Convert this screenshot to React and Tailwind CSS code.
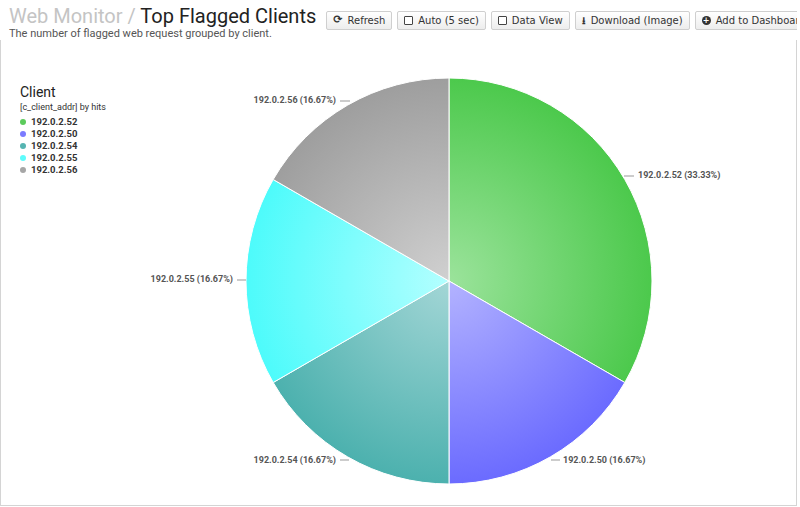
import React from "react";

const cx = 449, cy = 281, r = 203;
const pt = (deg) => {
  const a = (deg * Math.PI) / 180;
  return [cx + r * Math.sin(a), cy - r * Math.cos(a)];
};
const slices = [
  { from: 0, to: 120, c1: "#9be39b", c2: "#4cc94c", id: "g" },
  { from: 120, to: 180, c1: "#b3b3ff", c2: "#6b6bff", id: "b" },
  { from: 180, to: 240, c1: "#a3d6d6", c2: "#4cb1ae", id: "t" },
  { from: 240, to: 300, c1: "#b3ffff", c2: "#4dfbfb", id: "c" },
  { from: 300, to: 360, c1: "#d0d0d0", c2: "#9e9e9e", id: "s" },
];

function Btn({ children, icon }) {
  return (
    <div className="shrink-0 flex items-center gap-[5px] h-[19px] px-[6px] border border-[#cfcfcf] rounded-[2px] bg-gradient-to-b from-white to-[#ededed] text-[10px] text-[#333] whitespace-nowrap" style={{ fontFamily: "'DejaVu Sans', sans-serif" }}>
      {icon}
      {children}
    </div>
  );
}
const Box = () => <span className="inline-block w-[9px] h-[9px] border border-[#444] rounded-[1px] bg-white" />;

export default function App() {
  const legend = [
    ["#5ccb5c", "192.0.2.52"],
    ["#7b7bff", "192.0.2.50"],
    ["#56b4b1", "192.0.2.54"],
    ["#5efcfc", "192.0.2.55"],
    ["#a6a6a6", "192.0.2.56"],
  ];
  const labels = [
    [638, 178, "start", "192.0.2.52 (33.33%)", [624, 176, 634, 176]],
    [563, 463, "start", "192.0.2.50 (16.67%)", [551, 460, 560, 460]],
    [336, 463, "end", "192.0.2.54 (16.67%)", [349, 460, 340, 460]],
    [233, 282, "end", "192.0.2.55 (16.67%)", [246, 280, 237, 280]],
    [336, 103, "end", "192.0.2.56 (16.67%)", [350, 101, 340, 101]],
  ];
  return (
    <div className="relative w-[800px] h-[507px] bg-white overflow-hidden" style={{ fontFamily: "Roboto, sans-serif" }}>
      <div className="flex items-start pl-[9px] pt-[4px] w-[1000px]">
        <div className="shrink-0 whitespace-nowrap">
          <div className="text-[20px] leading-[24px] text-[#222]">
            <span className="text-[#c4c4c4]">Web Monitor / </span>Top Flagged Clients
          </div>
          <div className="text-[11px] leading-[12px] text-[#555]">The number of flagged web request grouped by client.</div>
        </div>
        <div className="flex gap-[5px] ml-[10px] mt-[7px] shrink-0">
          <Btn icon={<span className="text-[11px] font-bold">⟳</span>}>Refresh</Btn>
          <Btn icon={<Box />}>Auto (5 sec)</Btn>
          <Btn icon={<Box />}>Data View</Btn>
          <Btn icon={<span className="text-[10px] font-bold">⭳</span>}>Download (Image)</Btn>
          <Btn icon={<span className="inline-block w-[9px] h-[9px] rounded-full bg-[#333] text-white text-[8px] leading-[9px] text-center font-bold">+</span>}>Add to Dashboard</Btn>
          <Btn icon={<span className="text-[10px]">⚙</span>}>Settings</Btn>
        </div>
      </div>
      <div className="absolute left-0 top-[40px] w-[797px] h-[466px] border-l border-r border-b border-[#d4d4d4]" />
      <div className="absolute left-[797px] top-0 w-[3px] h-[507px] bg-white" />
      <svg className="absolute left-0 top-0" width="800" height="507">
        <defs>
          {slices.map((s) => (
            <radialGradient key={s.id} id={s.id} cx={cx} cy={cy} r={r} gradientUnits="userSpaceOnUse">
              <stop offset="0" stopColor={s.c1} />
              <stop offset="1" stopColor={s.c2} />
            </radialGradient>
          ))}
        </defs>
        {slices.map((s) => {
          const [x1, y1] = pt(s.from);
          const [x2, y2] = pt(s.to);
          const large = s.to - s.from > 180 ? 1 : 0;
          return <path key={s.id} d={`M${cx},${cy} L${x1},${y1} A${r},${r} 0 ${large} 1 ${x2},${y2} Z`} fill={`url(#${s.id})`} stroke="#fff" strokeWidth="1" />;
        })}
        {labels.map(([x, y, a, t, l]) => (
          <g key={t}>
            <line x1={l[0]} y1={l[1]} x2={l[2]} y2={l[3]} stroke="#999" strokeWidth="1" />
            <text x={x} y={y} textAnchor={a} fontSize="9" fontWeight="bold" fill="#555" fontFamily="Roboto, sans-serif">{t}</text>
          </g>
        ))}
      </svg>
      <div className="absolute left-[20px] top-[84px]">
        <div className="text-[14px] leading-[17px] text-[#222]">Client</div>
        <div className="text-[9px] leading-[13px] text-[#333] mb-[2px]">[c_client_addr] by hits</div>
        {legend.map(([c, t]) => (
          <div key={t} className="flex items-center gap-[5px] text-[9.5px] leading-[12px] font-bold text-[#333]">
            <span className="w-[6px] h-[6px] rounded-full" style={{ background: c }} />
            {t}
          </div>
        ))}
      </div>
    </div>
  );
}
